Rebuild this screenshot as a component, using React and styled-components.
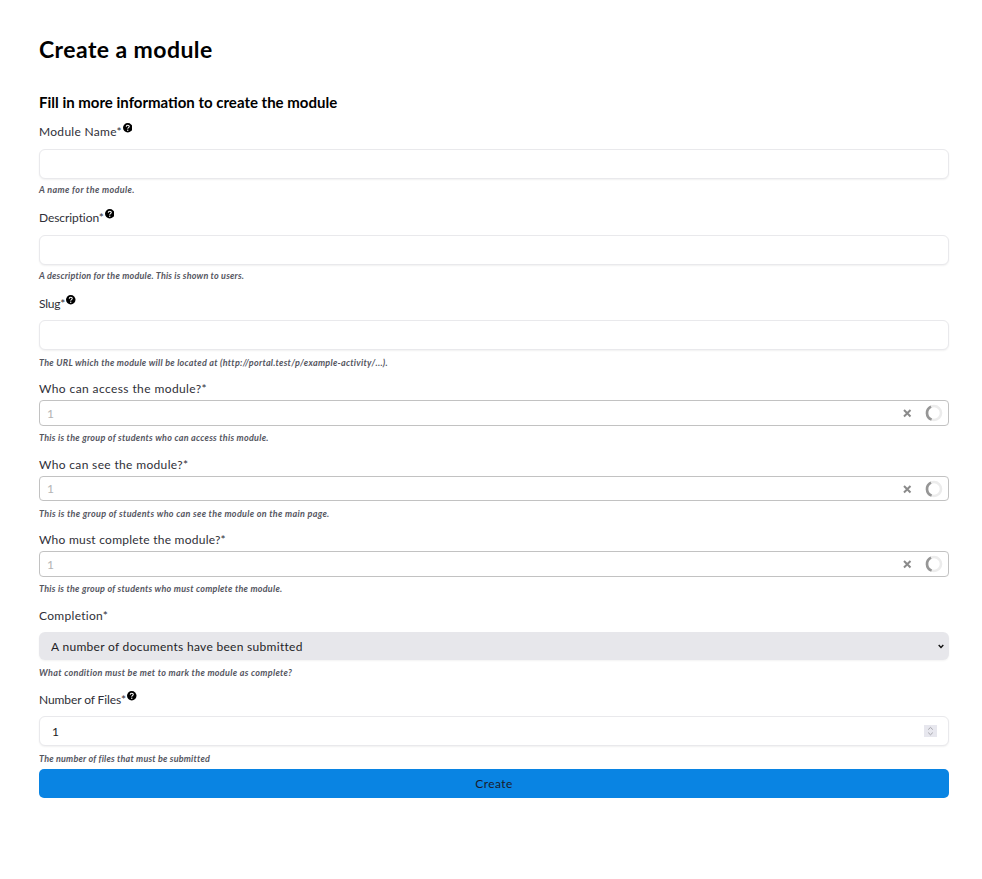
import React from "react";
import styled, { createGlobalStyle } from "styled-components";

const Global = createGlobalStyle`
  html, body { margin: 0; padding: 0; background: #fff; }
  body { font-family: Lato, "Noto Sans", "Liberation Sans", sans-serif; color: #000; }
`;
const Page = styled.main`
  box-sizing: border-box;
  width: 949px;
  height: 879px;
  padding: 37px 0 0 39px;
`;
const Title = styled.h1`
  margin: 0 0 30px;
  font-size: 23px;
  line-height: 25px;
  font-weight: 700;
  letter-spacing: 0.42px;
  color: #000;
`;
const Subtitle = styled.h2`
  margin: 0 0 12px;
  font-size: 15px;
  line-height: 20px;
  font-weight: 700;
  letter-spacing: 0;
`;
const Field = styled.div`
  display: flex;
  flex-direction: column;
  margin-bottom: ${(p) => p.$gap ?? 13}px;
`;
const Label = styled.label`
  display: flex;
  align-items: flex-start;
  height: 16px;
  margin-bottom: ${(p) => p.$gap ?? 9}px;
  font-size: 12px;
  line-height: 16px;
  letter-spacing: ${(p) => p.$spacing ?? 0.34}px;
  color: #2f2f38;
`;
const HelpIcon = styled.svg`
  width: 9.5px;
  height: 9.5px;
  margin: -1px 0 0 1px;
`;
const TextInput = styled.input`
  box-sizing: border-box;
  display: block;
  width: 100%;
  height: 30px;
  padding: 0 12px;
  border: 1px solid #e9e9ec;
  border-radius: 6px;
  box-shadow: 0 1px 2px rgba(0, 0, 0, 0.06);
  background: #fff;
  font: 12px Lato, sans-serif;
  color: #222;
  outline: none;
  appearance: textfield;
  &::-webkit-inner-spin-button {
    display: none;
  }
`;
const Help = styled.p`
  margin: ${(p) => p.$gap ?? 5}px 0 0;
  font-size: 9px;
  line-height: 12px;
  font-weight: 700;
  font-style: italic;
  letter-spacing: ${(p) => p.$spacing ?? 0.27}px;
  color: #55565f;
`;
const SelectBox = styled.div`
  box-sizing: border-box;
  display: flex;
  align-items: center;
  height: ${(p) => p.$h ?? 26}px;
  padding: 0 5px 0 7px;
  border: 1px solid #c2c2c2;
  border-radius: 4px;
  background: #fff;
`;
const SelectValue = styled.span`
  flex: 1;
  font-size: 12px;
  color: #b4b4b4;
`;
const ClearIcon = styled.svg`
  width: 10px;
  height: 10px;
  margin-right: 13px;
`;
const Spinner = styled.svg`
  width: 18px;
  height: 18px;
`;
const Overlaid = styled.div`
  position: relative;
`;
const NativeSelect = styled.select`
  box-sizing: border-box;
  display: block;
  width: 100%;
  height: 28px;
  padding: 0 12px;
  border: 0;
  border-radius: 6px;
  background: #e7e7eb;
  box-shadow: 0 1px 2px rgba(0, 0, 0, 0.05);
  font: 12px Lato, sans-serif;
  letter-spacing: 0.3px;
  color: #1f1f28;
  outline: none;
  appearance: none;
`;
const Chevron = styled.svg`
  position: absolute;
  top: 12px;
  right: 5px;
  width: 6px;
  height: 5px;
  pointer-events: none;
`;
const Stepper = styled.svg`
  position: absolute;
  top: 9px;
  right: 12px;
  width: 13px;
  height: 12px;
  pointer-events: none;
`;
const Submit = styled.button`
  display: block;
  width: 100%;
  height: 29px;
  margin-top: 4px;
  border: 0;
  border-radius: 5px;
  background: #0984e3;
  font: 12px Lato, sans-serif;
  letter-spacing: 0.42px;
  color: #1a1a2a;
`;

const Help1 = () => (
  <HelpIcon viewBox="0 0 10 10" aria-hidden="true">
    <circle cx="5" cy="5" r="5" fill="#000" />
    <path d="M3.4 3.9C3.4 3 4.1 2.4 5 2.4s1.6.6 1.6 1.4c0 1.1-1.6 1.1-1.6 2.2" fill="none" stroke="#fff" strokeWidth="1.1" />
    <circle cx="5" cy="7.6" r=".7" fill="#fff" />
  </HelpIcon>
);

const AsyncSelect = ({ h }) => (
  <SelectBox $h={h}>
    <SelectValue>1</SelectValue>
    <ClearIcon viewBox="0 0 10 10" aria-hidden="true">
      <path d="M2 2l6.5 6.5M8.5 2L2 8.5" stroke="#8a8a8a" strokeWidth="2" />
    </ClearIcon>
    <Spinner viewBox="0 0 18 18" aria-hidden="true">
      <circle cx="9" cy="9" r="7" fill="none" stroke="#ececec" strokeWidth="2.6" />
      <path d="M6 2.7A7 7 0 0 0 6.6 15.6" fill="none" stroke="#969696" strokeWidth="2.6" />
    </Spinner>
  </SelectBox>
);

export default function App() {
  return (
    <Page>
      <Global />
      <Title>Create a module</Title>
      <Subtitle>Fill in more information to create the module</Subtitle>

      <Field $gap={14}>
        <Label $spacing={0.3}>Module Name*<Help1 /></Label>
        <TextInput />
        <Help $spacing={0.36}>A name for the module.</Help>
      </Field>
      <Field $gap={14}>
        <Label $spacing={-0.08}>Description*<Help1 /></Label>
        <TextInput />
        <Help $spacing={0.2}>A description for the module. This is shown to users.</Help>
      </Field>
      <Field $gap={12}>
        <Label $gap={8} $spacing={-0.2}>Slug*<Help1 /></Label>
        <TextInput />
        <Help $gap={7}>The URL which the module will be located at (http://portal.test/p/example-activity/...).</Help>
      </Field>
      <Field>
        <Label $gap={3} $spacing={0.4}>Who can access the module?*</Label>
        <AsyncSelect />
        <Help $gap={6}>This is the group of students who can access this module.</Help>
      </Field>
      <Field $gap={12}>
        <Label $gap={3}>Who can see the module?*</Label>
        <AsyncSelect h={25} />
        <Help $gap={7} $spacing={0.32}>This is the group of students who can see the module on the main page.</Help>
      </Field>
      <Field>
        <Label $gap={3} $spacing={0.24}>Who must complete the module?*</Label>
        <AsyncSelect />
        <Help $gap={6} $spacing={0.25}>This is the group of students who must complete the module.</Help>
      </Field>
      <Field>
        <Label $gap={8} $spacing={0.3}>Completion*</Label>
        <Overlaid>
          <NativeSelect defaultValue="docs">
            <option value="docs">A number of documents have been submitted</option>
          </NativeSelect>
          <Chevron viewBox="0 0 6 5" aria-hidden="true">
            <path d="M.7 1l2.3 2.4L5.3 1" fill="none" stroke="#111" strokeWidth="1.4" />
          </Chevron>
        </Overlaid>
        <Help $gap={7} $spacing={0.32}>What condition must be met to mark the module as complete?</Help>
      </Field>
      <Field $gap={0}>
        <Label $gap={8} $spacing={-0.1}>Number of Files*<Help1 /></Label>
        <Overlaid>
          <TextInput type="number" defaultValue="1" />
          <Stepper viewBox="0 0 13 12" aria-hidden="true">
            <rect width="13" height="12" fill="#e7e7ee" />
            <path d="M4.2 4.6l2.3-2.2 2.3 2.2M4.2 7.6l2.3 2.2 2.3-2.2" fill="none" stroke="#a5a5ab" strokeWidth="1" />
          </Stepper>
        </Overlaid>
        <Help $gap={7} $spacing={0.2}>The number of files that must be submitted</Help>
      </Field>
      <Submit type="button">Create</Submit>
    </Page>
  );
}
